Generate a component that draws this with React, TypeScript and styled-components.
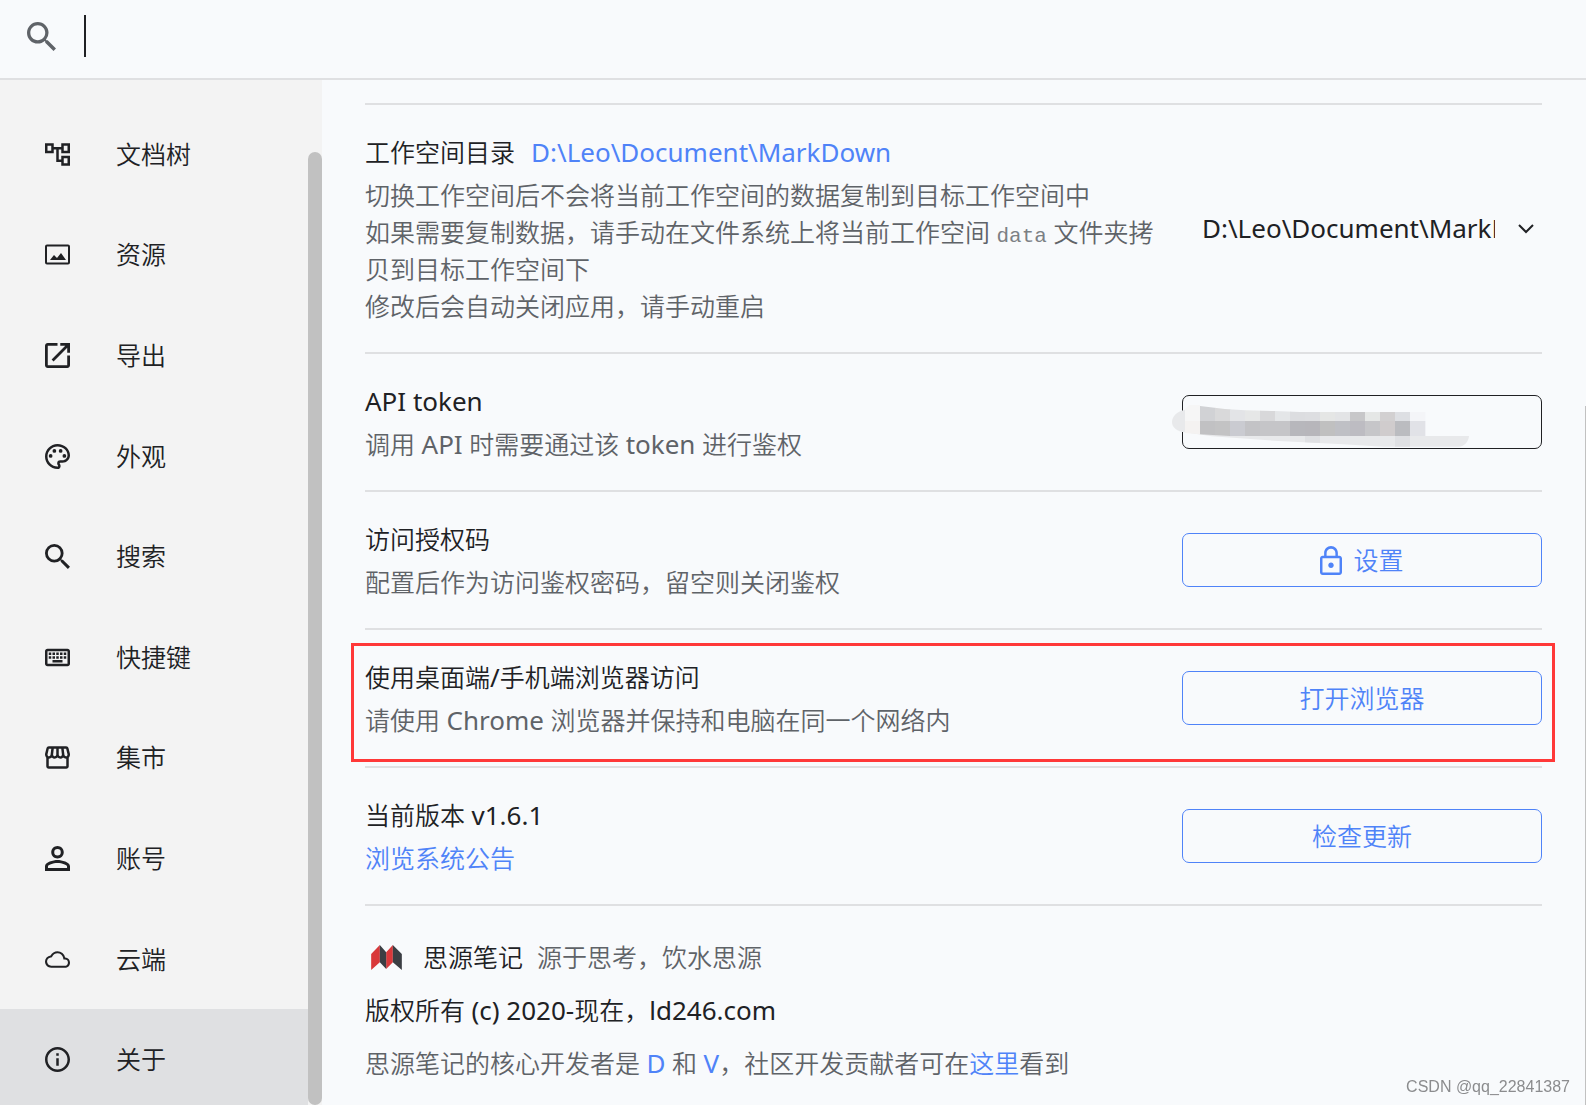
import React from "react";
import styled, { createGlobalStyle } from "styled-components";

const ink = "#202124";
const muted = "#5f6368";
const primary = "#4f83f8";
const line = "#dfe0e2";
const surface = "#f8fafc";

const GlobalStyle = createGlobalStyle`
  *, *::before, *::after { box-sizing: border-box; }
  body {
    margin: 0;
    background: ${surface};
    color: ${ink};
    font-family: "Noto Sans", "Noto Sans CJK SC", sans-serif;
    font-size: 25px;
    font-weight: 350;
    line-height: 37px;
  }
  button, input, select { font: inherit; color: inherit; }
`;

const Page = styled.div`
  display: flex;
  flex-direction: column;
  height: 100vh;
  overflow: hidden;
`;

const Header = styled.header`
  display: flex;
  flex: none;
  align-items: center;
  height: 80px;
  padding: 0 24px 6px 27px;
  border-bottom: 2px solid ${line};
`;

const SearchLabel = styled.label`
  display: flex;
  color: ${muted};
`;

const Caret = styled.span`
  width: 2px;
  height: 42px;
  margin-left: 28px;
  background: ${ink};
`;

const SearchInput = styled.input`
  flex: 1;
  min-width: 0;
  height: 42px;
  border: 0;
  outline: 0;
  background: transparent;
`;

const Body = styled.div`
  display: flex;
  flex: 1;
  min-height: 0;
`;

const Sidebar = styled.nav`
  display: flex;
  flex: none;
  width: 322px;
  background: #f3f3f3;
`;

const NavList = styled.ul`
  display: flex;
  flex: 1;
  flex-direction: column;
  min-height: calc(100% + 5px);
  margin: 0;
  padding: 24px 0 0;
  list-style: none;
`;

const NavItem = styled.li`
  flex: 1 0 100px;
  display: flex;
`;

const NavButton = styled.button<{ $active: boolean }>`
  display: flex;
  flex: 1;
  align-items: center;
  gap: 46px;
  padding: 0 45px;
  border: 0;
  background: ${(p) => (p.$active ? "#dfe0e2" : "transparent")};
  text-align: left;
`;

const SidebarThumb = styled.div`
  width: 14px;
  margin-top: 72px;
  border-radius: 7px;
  background: #c1c1c1;
`;

const Main = styled.main`
  flex: 1;
  min-width: 0;
  padding: 23px 44px 0 43px;
`;

const PageThumb = styled.div`
  width: 1px;
  margin: 326px 0 0 -1px;
  background: #c1c1c1;
`;

const Row = styled.section`
  position: relative;
  display: flex;
  align-items: center;
  gap: 16px;
  border-top: 2px solid ${line};
  padding: 29px 0 27px;
`;

const RowText = styled.div`
  display: flex;
  flex: 1;
  flex-direction: column;
  gap: 6px;
  min-width: 0;
`;

const Title = styled.div`
  white-space: pre-wrap;
`;

const TitleWithLink = styled.div`
  display: flex;
  gap: 16px;
`;

const Description = styled.div`
  color: ${muted};
`;

const Latin = styled.span`
  font-size: 26px;
  font-weight: 400;
  line-height: 20px;
`;

const Code = styled.code`
  color: #7c8084;
  font-family: "Liberation Mono", monospace;
  font-size: 21px;
  line-height: 20px;
`;

const Link = styled.a`
  color: ${primary};
  text-decoration: none;
`;

const Control = styled.div`
  position: relative;
  display: grid;
  flex: none;
  align-items: center;
  width: 360px;
  margin-bottom: 2px;
`;

const Select = styled.select`
  grid-area: 1 / 1;
  width: 100%;
  height: 54px;
  padding: 0 47px 0 20px;
  border: 0;
  outline: 0;
  appearance: none;
  background: transparent;
  color: ${ink};
  font-size: 26px;
  font-weight: 400;
`;

const SelectArrow = styled.svg`
  grid-area: 1 / 1;
  justify-self: end;
  margin-right: 8px;
  pointer-events: none;
`;

const TextInput = styled.input`
  width: 100%;
  height: 54px;
  padding: 0 20px;
  border: 1px solid ${ink};
  border-radius: 7px;
  background: transparent;
`;

const Mosaic = styled.svg`
  position: absolute;
  left: -10px;
  top: 6px;
`;

const OutlineButton = styled.button`
  display: flex;
  align-items: center;
  justify-content: center;
  gap: 11px;
  width: 100%;
  height: 54px;
  padding: 0;
  border: 1px solid ${primary};
  border-radius: 7px;
  background: transparent;
  color: ${primary};
`;

const Highlight = styled.div`
  position: absolute;
  inset: 13px -13px 4px -14px;
  border: 3px solid #ff3838;
  pointer-events: none;
`;

const About = styled.footer`
  display: flex;
  flex-direction: column;
  gap: 16px;
  padding-top: 33px;
  border-top: 2px solid ${line};
`;

const Brand = styled.div`
  display: flex;
  align-items: center;
  gap: 14px;
  padding-left: 6px;
`;

const BrandName = styled.span`
  margin-left: 7px;
`;

const Muted = styled.span`
  color: ${muted};
`;

const Watermark = styled.div`
  position: fixed;
  right: 16px;
  bottom: 6px;
  color: #8b8c8e;
  font: 400 16px/24px "Liberation Sans", sans-serif;
`;

const searchPath =
  "M15.5 14h-.79l-.28-.27A6.471 6.471 0 0 0 16 9.5 6.5 6.5 0 1 0 9.5 16c1.61 0 3.09-.59 4.23-1.57l.27.28v.79l5 4.99L20.49 19l-4.99-5zm-6 0C7.01 14 5 11.99 5 9.5S7.01 5 9.5 5 14 7.01 14 9.5 11.99 14 9.5 14z";

const navItems = [
  {
    label: "文档树",
    box: "2 2 20 20",
    path: "M22 11V3h-7v3H9V3H2v8h7V8h2v10h4v3h7v-8h-7v3h-2V8h2v3h7zM7 9H4V5h3v4zm10 6h3v4h-3v-4zm0-10h3v4h-3V5z",
  },
  {
    label: "资源",
    box: "0 0 25 25",
    path: "M2 2.5h21a2 2 0 0 1 2 2v16a2 2 0 0 1-2 2H2a2 2 0 0 1-2-2v-16a2 2 0 0 1 2-2zm0 2v16h21v-16zM5 18l4-5 3 3 4-5 5 7z",
  },
  {
    label: "导出",
    box: "3 3 18 18",
    path: "M19 19H5V5h7V3H5c-1.11 0-2 .9-2 2v14c0 1.1.89 2 2 2h14c1.1 0 2-.9 2-2v-7h-2v7zM14 3v2h3.59l-9.83 9.83 1.41 1.41L19 6.41V10h2V3h-7z",
  },
  {
    label: "外观",
    box: "2 2 20 20",
    path: "M12 22C6.49 22 2 17.51 2 12S6.49 2 12 2s10 4.04 10 9c0 3.31-2.69 6-6 6h-1.77c-.28 0-.5.22-.5.5 0 .12.05.23.13.33.41.47.64 1.06.64 1.67A2.5 2.5 0 0 1 12 22zm0-18c-4.41 0-8 3.59-8 8s3.59 8 8 8c.28 0 .5-.22.5-.5a.54.54 0 0 0-.14-.35c-.41-.46-.63-1.05-.63-1.65a2.5 2.5 0 0 1 2.5-2.5H16c2.21 0 4-1.79 4-4 0-3.86-3.59-7-8-7zM5 11.5a1.5 1.5 0 1 0 3 0 1.5 1.5 0 1 0-3 0zM8 7.5a1.5 1.5 0 1 0 3 0 1.5 1.5 0 1 0-3 0zM13 7.5a1.5 1.5 0 1 0 3 0 1.5 1.5 0 1 0-3 0zM16 11.5a1.5 1.5 0 1 0 3 0 1.5 1.5 0 1 0-3 0z",
  },
  { label: "搜索", box: "3 3 17.5 17.5", path: searchPath },
  {
    label: "快捷键",
    box: "2 2 20 20",
    path: "M20 7v10H4V7h16m0-2H4c-1.1 0-1.99.9-1.99 2L2 17c0 1.1.9 2 2 2h16c1.1 0 2-.9 2-2V7c0-1.1-.9-2-2-2zm-9 3h2v2h-2zm0 3h2v2h-2zM8 8h2v2H8zm0 3h2v2H8zm-3 0h2v2H5zm0-3h2v2H5zm3 6h8v2H8zm6-3h2v2h-2zm0-3h2v2h-2zm3 3h2v2h-2zm0-3h2v2h-2z",
  },
  {
    label: "集市",
    box: "2 2 20 20",
    path: "m21.9 8.89-1.05-4.37c-.22-.9-1-1.52-1.91-1.52H5.05c-.9 0-1.69.63-1.9 1.52L2.1 8.89c-.24 1.02-.02 2.06.62 2.88.08.11.19.19.28.29V19c0 1.1.9 2 2 2h14c1.1 0 2-.9 2-2v-6.94c.09-.09.2-.18.28-.28.64-.82.87-1.87.62-2.89zm-2.99-3.9 1.05 4.37c.1.42.01.84-.25 1.17-.14.18-.44.47-.94.47-.61 0-1.14-.49-1.21-1.14L16.98 5l1.93-.01zM13 5h1.96l.54 4.52c.05.39-.07.78-.33 1.07-.22.26-.54.41-.95.41-.67 0-1.22-.59-1.22-1.31V5zM8.49 9.52 9.04 5H11v4.69c0 .72-.55 1.31-1.29 1.31-.34 0-.65-.15-.89-.41-.25-.29-.37-.68-.33-1.07zm-4.45-.16L5.05 5h1.97l-.58 4.86c-.08.65-.6 1.14-1.21 1.14-.49 0-.8-.29-.93-.47-.27-.32-.36-.75-.26-1.17zM5 19v-6.03c.08.01.15.03.23.03.87 0 1.66-.36 2.24-.95.6.6 1.4.95 2.31.95.87 0 1.65-.36 2.23-.93.59.57 1.39.93 2.29.93.84 0 1.64-.35 2.24-.95.58.59 1.37.95 2.24.95.08 0 .15-.02.23-.03V19H5z",
  },
  {
    label: "账号",
    box: "4 4 16 16",
    path: "M12 5.9a2.1 2.1 0 1 1 0 4.2 2.1 2.1 0 0 1 0-4.2m0 9c2.97 0 6.1 1.46 6.1 2.1v1.1H5.9V17c0-.64 3.13-2.1 6.1-2.1M12 4C9.79 4 8 5.79 8 8s1.79 4 4 4 4-1.79 4-4-1.79-4-4-4zm0 9c-2.67 0-8 1.34-8 4v3h16v-3c0-2.66-5.33-4-8-4z",
  },
  {
    label: "云端",
    box: "0 0 24 24",
    path: "M19.35 10.04A7.49 7.49 0 0 0 12 4C9.11 4 6.6 5.64 5.35 8.04A5.994 5.994 0 0 0 0 14c0 3.31 2.69 6 6 6h13c2.76 0 5-2.24 5-5 0-2.64-2.05-4.78-4.65-4.96zM19 18H6c-2.21 0-4-1.79-4-4 0-2.05 1.53-3.76 3.56-3.97l1.07-.11.5-.95A5.469 5.469 0 0 1 12 6c2.62 0 4.88 1.86 5.39 4.43l.3 1.5 1.53.11A2.98 2.98 0 0 1 22 15c0 1.65-1.35 3-3 3z",
  },
  {
    label: "关于",
    box: "2 2 20 20",
    path: "M11 7h2v2h-2V7zm0 4h2v6h-2v-6zm1-9C6.48 2 2 6.48 2 12s4.48 10 10 10 10-4.48 10-10S17.52 2 12 2zm0 18c-4.41 0-8-3.59-8-8s3.59-8 8-8 8 3.59 8 8-3.59 8-8 8z",
  },
];

const lockPath =
  "M18 8h-1V6c0-2.76-2.24-5-5-5S7 3.24 7 6v2H6c-1.1 0-2 .9-2 2v10c0 1.1.9 2 2 2h12c1.1 0 2-.9 2-2V10c0-1.1-.9-2-2-2zM8.8 6c0-1.8 1.4-3.1 3.2-3.1s3.2 1.3 3.2 3.1v2H8.8V6zM18.2 20.2H5.8V9.8h12.4v10.4zM12 17c1.1 0 2-.9 2-2s-.9-2-2-2-2 .9-2 2 .9 2 2 2z";

type IconProps = { box: string; path: string; width?: number; height?: number };

function Icon({ box, path, width = 25, height = 25 }: IconProps) {
  return (
    <svg width={width} height={height} viewBox={box} fill="currentColor" fillRule="evenodd" aria-hidden="true">
      <path d={path} />
    </svg>
  );
}

const upperCells = ["#d1d2d5", "#d9d9da", "#e3e4e7", "#e6e7e7", "#d8d8da", "#e4e6e8", "#dcdde0", "#dddee1", "#e5e6e5", "#e3e4e6", "#c7c7c9", "#e5e7e6", "#d2d0d1", "#dddfe3", "#f4f5f8"];
const lowerCells = ["#c1c1c3", "#c3c3c4", "#cacbd1", "#c3c3c6", "#c5c5c8", "#c5c5c8", "#b7b7bc", "#b7b6bb", "#c0c0c0", "#bfc0c5", "#bdbcc2", "#c6c6c9", "#d0cccd", "#bbbcc0", "#e1e2e7"];

function TokenMosaic() {
  return (
    <Mosaic width="298" height="48" viewBox="96 660 894 144" aria-hidden="true">
      <defs>
        <clipPath id="stroke-area">
          <path d="M180 675L255 684 315 688 405 690 480 693H860V765H270L180 760z" />
        </clipPath>
      </defs>
      <path d="M135 686C112 690 96 706 96 723S112 752 135 754L215 766 400 779 610 790 730 797H955C975 797 986 780 987 765H600L180 700z" fill="#e8e9eb" />
      <path d="M495 765h45v21l-45-2zM765 765h45v32h-45z" fill="#dfe0e3" />
      <path d="M135 684L148 672H180V720H135z" fill="#f6f6f6" />
      <path d="M135 720h45v40l-45-4z" fill="#f4f2f1" />
      <g clipPath="url(#stroke-area)">
        {upperCells.map((fill, i) => (
          <rect key={i} x={180 + i * 45} y="672" width="46" height="49" fill={fill} />
        ))}
        {lowerCells.map((fill, i) => (
          <rect key={i} x={180 + i * 45} y="720" width="46" height="45" fill={fill} />
        ))}
      </g>
    </Mosaic>
  );
}

export default function App() {
  return (
    <Page lang="zh-CN">
      <GlobalStyle />
      <Header>
        <SearchLabel htmlFor="search" aria-label="搜索">
          <Icon box="3 3 17.5 17.5" path={searchPath} width={29} height={29} />
        </SearchLabel>
        <Caret />
        <SearchInput id="search" type="text" />
      </Header>
      <Body>
        <Sidebar>
          <NavList>
            {navItems.map((item) => (
              <NavItem key={item.label}>
                <NavButton type="button" $active={item.label === "关于"}>
                  <Icon box={item.box} path={item.path} />
                  {item.label}
                </NavButton>
              </NavItem>
            ))}
          </NavList>
          <SidebarThumb />
        </Sidebar>
        <Main>
          <Row>
            <RowText>
              <TitleWithLink>
                <label htmlFor="workspace">工作空间目录</label>
                <Link href="#workspace">
                  <Latin>D:\Leo\Document\MarkDown</Latin>
                </Link>
              </TitleWithLink>
              <Description>
                切换工作空间后不会将当前工作空间的数据复制到目标工作空间中
                <br />
                如果需要复制数据，请手动在文件系统上将当前工作空间 <Code>data</Code> 文件夹拷贝到目标工作空间下
                <br />
                修改后会自动关闭应用，请手动重启
              </Description>
            </RowText>
            <Control>
              <Select id="workspace" defaultValue="main">
                <option value="main">D:\Leo\Document\MarkDown</option>
              </Select>
              <SelectArrow width="16" height="10" viewBox="0 0 16 10" fill="none" stroke={ink} strokeWidth="2" aria-hidden="true">
                <path d="M1 1l7 7 7-7" />
              </SelectArrow>
            </Control>
          </Row>
          <Row>
            <RowText>
              <Title>
                <label htmlFor="token">
                  <Latin>API token</Latin>
                </label>
              </Title>
              <Description>
                调用 <Latin>API</Latin> 时需要通过该 <Latin>token</Latin> 进行鉴权
              </Description>
            </RowText>
            <Control>
              <TextInput id="token" type="text" />
              <TokenMosaic />
            </Control>
          </Row>
          <Row>
            <RowText>
              <Title>访问授权码</Title>
              <Description>配置后作为访问鉴权密码，留空则关闭鉴权</Description>
            </RowText>
            <Control>
              <OutlineButton type="button">
                <Icon box="4 1 16 21" path={lockPath} width={22} height={29} />
                设置
              </OutlineButton>
            </Control>
          </Row>
          <Row>
            <RowText>
              <Title>
                使用桌面端<Latin>/</Latin>手机端浏览器访问
              </Title>
              <Description>
                请使用 <Latin>Chrome</Latin> 浏览器并保持和电脑在同一个网络内
              </Description>
            </RowText>
            <Control>
              <OutlineButton type="button">打开浏览器</OutlineButton>
            </Control>
            <Highlight />
          </Row>
          <Row>
            <RowText>
              <Title>
                当前版本 <Latin>v1.6.1</Latin>
              </Title>
              <Description>
                <Link href="#notice">浏览系统公告</Link>
              </Description>
            </RowText>
            <Control>
              <OutlineButton type="button">检查更新</OutlineButton>
            </Control>
          </Row>
          <About>
            <Brand>
              <svg width="31" height="25" viewBox="64 135 92 75" aria-hidden="true">
                <path d="M64 162L90 135V187L64 210zM109 157L129 135V187L109 207z" fill="#d9383a" />
                <path d="M90 135L109 157V207L90 187zM129 135L156 162V210L129 187z" fill="#3b3e43" />
              </svg>
              <BrandName>思源笔记</BrandName>
              <Muted>源于思考，饮水思源</Muted>
            </Brand>
            <div>
              版权所有 <Latin>(c) 2020-</Latin>现在，<Latin>ld246.com</Latin>
            </div>
            <Muted>
              思源笔记的核心开发者是{" "}
              <Link href="#d">
                <Latin>D</Latin>
              </Link>{" "}
              和{" "}
              <Link href="#v">
                <Latin>V</Latin>
              </Link>
              ，社区开发贡献者可在<Link href="#contributors">这里</Link>看到
            </Muted>
          </About>
        </Main>
        <PageThumb />
      </Body>
      <Watermark>CSDN @qq_22841387</Watermark>
    </Page>
  );
}
